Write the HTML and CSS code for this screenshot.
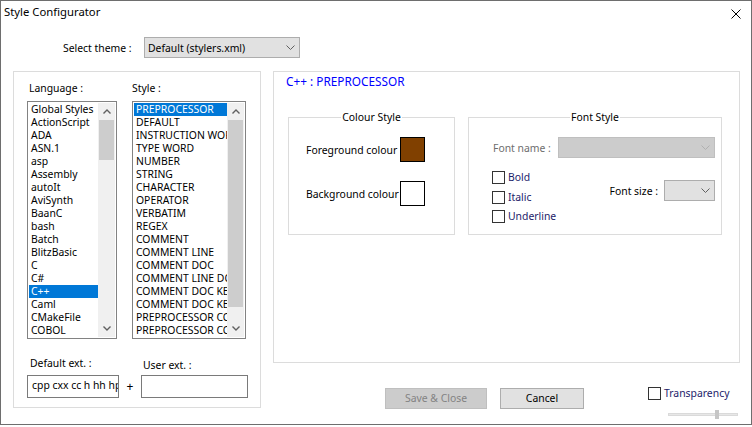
FILE: index.html
```html
<!DOCTYPE html>
<html lang="en">
<head>
  <meta charset="UTF-8">
  <title>Style Configurator</title>
  <link rel="stylesheet" href="styles.css">
</head>
<body>
  <div class="window">
    <div class="titlebar">
      <div class="title">Style Configurator</div>
      <svg class="close" width="10" height="10" viewBox="0 0 10 10">
        <path d="M0.5 0.5 L9.5 9.5 M9.5 0.5 L0.5 9.5" stroke="#000" stroke-width="1" fill="none"/>
      </svg>
    </div>

    <div class="theme-row">
      <span class="theme-label">Select theme :</span>
      <div class="combo theme-combo">
        <span>Default (stylers.xml)</span>
        <svg class="chevron" width="9" height="5" viewBox="0 0 9 5"><polyline points="0.5,0.5 4.5,4.5 8.5,0.5" fill="none" stroke="#606060"/></svg>
      </div>
    </div>

    <div class="main">
      <div class="left-group">
        <div class="lists">
          <div class="col">
            <div class="col-label lang-label">Language :</div>
            <div class="listbox lang-list">
              <div class="items">
                <div class="item">Global Styles</div>
                <div class="item">ActionScript</div>
                <div class="item">ADA</div>
                <div class="item">ASN.1</div>
                <div class="item">asp</div>
                <div class="item">Assembly</div>
                <div class="item">autoIt</div>
                <div class="item">AviSynth</div>
                <div class="item">BaanC</div>
                <div class="item">bash</div>
                <div class="item">Batch</div>
                <div class="item">BlitzBasic</div>
                <div class="item">C</div>
                <div class="item">C#</div>
                <div class="item sel">C++</div>
                <div class="item">Caml</div>
                <div class="item">CMakeFile</div>
                <div class="item">COBOL</div>
              </div>
              <div class="scrollbar">
                <div class="sb-btn"><svg width="8" height="5" viewBox="0 0 8 5"><polyline points="0.5,4.5 4,1 7.5,4.5" fill="none" stroke="#606060" stroke-width="1.4"/></svg></div>
                <div class="sb-track"><div class="sb-thumb lang-thumb"></div></div>
                <div class="sb-btn"><svg width="8" height="5" viewBox="0 0 8 5"><polyline points="0.5,0.5 4,4 7.5,0.5" fill="none" stroke="#606060" stroke-width="1.4"/></svg></div>
              </div>
            </div>
          </div>
          <div class="col">
            <div class="col-label">Style :</div>
            <div class="listbox style-list">
              <div class="items">
                <div class="item sel">PREPROCESSOR</div>
                <div class="item">DEFAULT</div>
                <div class="item">INSTRUCTION WORD</div>
                <div class="item">TYPE WORD</div>
                <div class="item">NUMBER</div>
                <div class="item">STRING</div>
                <div class="item">CHARACTER</div>
                <div class="item">OPERATOR</div>
                <div class="item">VERBATIM</div>
                <div class="item">REGEX</div>
                <div class="item">COMMENT</div>
                <div class="item">COMMENT LINE</div>
                <div class="item">COMMENT DOC</div>
                <div class="item">COMMENT LINE DOC</div>
                <div class="item">COMMENT DOC KEYWORD</div>
                <div class="item">COMMENT DOC KEYWORD ERROR</div>
                <div class="item">PREPROCESSOR COMMENT</div>
                <div class="item">PREPROCESSOR COMMENT DOC</div>
              </div>
              <div class="scrollbar">
                <div class="sb-btn"><svg width="8" height="5" viewBox="0 0 8 5"><polyline points="0.5,4.5 4,1 7.5,4.5" fill="none" stroke="#606060" stroke-width="1.4"/></svg></div>
                <div class="sb-track"><div class="sb-thumb style-thumb"></div></div>
                <div class="sb-btn"><svg width="8" height="5" viewBox="0 0 8 5"><polyline points="0.5,0.5 4,4 7.5,0.5" fill="none" stroke="#606060" stroke-width="1.4"/></svg></div>
              </div>
            </div>
          </div>
        </div>

        <div class="ext">
          <div class="ext-col">
            <div class="ext-label">Default ext. :</div>
            <div class="input default-ext">cpp cxx cc h hh hpp hxx ino</div>
          </div>
          <div class="plus">+</div>
          <div class="ext-col">
            <div class="ext-label user-label">User ext. :</div>
            <div class="input user-ext"></div>
          </div>
        </div>
      </div>

      <div class="right">
        <div class="style-group">
          <div class="style-name">C++ : PREPROCESSOR</div>
          <div class="groups">
            <fieldset class="colour-box">
              <legend>Colour Style</legend>
              <div class="colour-rows">
                <div class="colour-row">
                  <span class="colour-label">Foreground colour</span>
                  <span class="swatch fg"></span>
                </div>
                <div class="colour-row">
                  <span class="colour-label">Background colour</span>
                  <span class="swatch bg"></span>
                </div>
              </div>
            </fieldset>
            <fieldset class="font-box">
              <legend>Font Style</legend>
              <div class="font-name-row">
                <span class="font-name-label">Font name :</span>
                <div class="combo disabled font-name-combo">
                  <svg class="chevron" width="9" height="5" viewBox="0 0 9 5"><polyline points="0.5,0.5 4.5,4.5 8.5,0.5" fill="none" stroke="#b0b0b0"/></svg>
                </div>
              </div>
              <div class="font-lower">
                <div class="checks">
                  <label class="check"><span class="box"></span><span class="check-text">Bold</span></label>
                  <label class="check"><span class="box"></span><span class="check-text">Italic</span></label>
                  <label class="check"><span class="box"></span><span class="check-text">Underline</span></label>
                </div>
                <div class="font-size">
                  <span class="font-size-label">Font size :</span>
                  <div class="combo size-combo">
                    <svg class="chevron" width="9" height="5" viewBox="0 0 9 5"><polyline points="0.5,0.5 4.5,4.5 8.5,0.5" fill="none" stroke="#606060"/></svg>
                  </div>
                </div>
              </div>
            </fieldset>
          </div>
        </div>

        <div class="actions">
          <div class="btn disabled save">Save &amp; Close</div>
          <div class="btn cancel">Cancel</div>
          <div class="transparency">
            <label class="check"><span class="box"></span><span class="check-text">Transparency</span></label>
            <div class="slider">
              <div class="slider-track"></div>
              <div class="slider-thumb"></div>
            </div>
          </div>
        </div>
      </div>
    </div>
  </div>
</body>
</html>
```

FILE: styles.css
```css
* {
  box-sizing: border-box;
}
body {
  margin: 0;
  background: #fff;
  font-family: 'Noto Sans', sans-serif;
  font-size: 10.4px;
  color: #000;
}
.window {
  width: 752px;
  height: 425px;
  border: 1px solid #6e6e6e;
  background: #fff;
  overflow: hidden;
}

/* title bar */
.titlebar {
  display: flex;
  align-items: flex-start;
  height: 29px;
}
.title {
  font-size: 11.3px;
  line-height: 16px;
  padding: 3px 0 0 3px;
}
.close {
  margin: 8px 10px 0 auto;
}

/* theme selector */
.theme-row {
  display: flex;
  align-items: center;
  margin-top: 7px;
  padding-left: 62px;
}
.theme-label {
  width: 81px;
  line-height: 14px;
}
.combo {
  display: flex;
  align-items: center;
  height: 21px;
  border: 1px solid #adadad;
  background: #e1e1e1;
  padding-left: 3px;
}
.combo.disabled {
  background: #cccccc;
  border-color: #bfbfbf;
}
.chevron {
  margin-left: auto;
  margin-right: 4px;
}
.theme-combo {
  width: 156px;
}

/* layout */
.main {
  display: flex;
  align-items: flex-start;
  gap: 12px;
  margin-top: 13px;
  padding-left: 12px;
}
.left-group {
  width: 248px;
  height: 337px;
  border: 1px solid #dcdcdc;
  padding: 9px 0 0 13px;
}
.lists {
  display: flex;
  gap: 15px;
}
.col {
  display: flex;
  flex-direction: column;
}
.col-label {
  line-height: 14px;
  margin-bottom: 6px;
}
.lang-label {
  padding-left: 2px;
}

/* list boxes */
.listbox {
  display: flex;
  height: 238px;
  border: 1px solid #828282;
  padding: 1px;
}
.lang-list {
  width: 90px;
}
.style-list {
  width: 114px;
}
.items {
  flex: 1;
  min-width: 0;
  overflow: hidden;
}
.item {
  height: 13px;
  line-height: 13px;
  padding-left: 2px;
  white-space: nowrap;
  overflow: hidden;
}
.item.sel {
  background: #0078d7;
  color: #fff;
}
.scrollbar {
  width: 17px;
  display: flex;
  flex-direction: column;
  background: #f0f0f0;
}
.sb-btn {
  height: 17px;
  display: flex;
  align-items: center;
  justify-content: center;
}
.sb-track {
  flex: 1;
}
.sb-thumb {
  margin: 0 1px;
  background: #cdcdcd;
}
.lang-thumb {
  height: 40px;
}
.style-thumb {
  height: 187px;
}

/* extensions */
.ext {
  display: flex;
  margin-top: 17px;
}
.ext-col {
  display: flex;
  flex-direction: column;
}
.ext-label {
  line-height: 14px;
  padding-left: 3px;
  margin-bottom: 5px;
}
.user-label {
  padding-left: 2px;
  margin-top: 2px;
  margin-bottom: 3px;
}
.input {
  height: 23px;
  border: 1px solid #7a7a7a;
  line-height: 19px;
  padding-left: 4px;
  white-space: nowrap;
  overflow: hidden;
}
.default-ext {
  width: 92px;
}
.user-ext {
  width: 107px;
}
.plus {
  width: 22px;
  align-self: flex-end;
  text-align: center;
  line-height: 23px;
  font-size: 12px;
}

/* right side */
.right {
  width: 467px;
  display: flex;
  flex-direction: column;
}
.style-group {
  height: 292px;
  border: 1px solid #dcdcdc;
  padding: 1px 0 0 12px;
}
.style-name {
  font-size: 11.8px;
  line-height: 16px;
  color: #0000ff;
}
.groups {
  display: flex;
  gap: 13px;
  margin: 21px 0 0 2px;
}
fieldset {
  margin: 0;
  padding: 0;
  min-width: 0;
  height: 125px;
  border: 1px solid #dcdcdc;
}
legend {
  margin: 0 auto;
  padding: 0 1px;
  line-height: 15px;
}
.colour-box {
  width: 167px;
}
.font-box {
  width: 254px;
}
.colour-rows {
  display: flex;
  flex-direction: column;
  gap: 19px;
  padding: 12px 0 0 17px;
}
.colour-row {
  display: flex;
  align-items: center;
}
.colour-label {
  width: 94px;
  line-height: 14px;
}
.swatch {
  width: 25px;
  height: 25px;
  border: 1px solid #000;
}
.swatch.fg {
  background: #804000;
}
.swatch.bg {
  background: #fff;
}
.font-name-row {
  display: flex;
  align-items: center;
  padding: 12px 0 0 24px;
}
.font-name-label {
  width: 65px;
  color: #6d6d6d;
  line-height: 14px;
}
.font-name-combo {
  width: 157px;
}
.font-lower {
  display: flex;
  align-items: flex-start;
  margin-top: 13px;
  padding-left: 23px;
}
.checks {
  display: flex;
  flex-direction: column;
  gap: 6.5px;
}
.check {
  display: flex;
  align-items: center;
  height: 13px;
}
.box {
  width: 13px;
  height: 13px;
  border: 1px solid #333;
  background: #fff;
}
.check-text {
  margin-left: 3px;
  line-height: 13px;
  color: #1c1c6a;
}
.font-size {
  display: flex;
  align-items: center;
  margin: 9px 6px 0 auto;
}
.font-size-label {
  margin-right: 6px;
  line-height: 14px;
}
.size-combo {
  width: 51px;
}

/* bottom buttons */
.actions {
  display: flex;
  align-items: flex-start;
  margin-top: 25px;
  padding-left: 112px;
}
.btn {
  height: 21px;
  border: 1px solid #adadad;
  background: #e1e1e1;
  text-align: center;
  line-height: 19px;
}
.btn.disabled {
  background: #cccccc;
  border-color: #bfbfbf;
  color: #838383;
}
.save {
  width: 102px;
}
.cancel {
  width: 84px;
  margin-left: 13px;
}
.transparency {
  display: flex;
  flex-direction: column;
  margin: -1px 0 0 64px;
}
.slider {
  position: relative;
  width: 70px;
  height: 9px;
  margin: 10px 0 0 20px;
}
.slider-track {
  margin-top: 3px;
  height: 3px;
  background: #e7e7e7;
  border: 1px solid #dadada;
}
.slider-thumb {
  position: absolute;
  left: 47px;
  top: 0;
  width: 4px;
  height: 9px;
  background: #c6c6c6;
}
```
